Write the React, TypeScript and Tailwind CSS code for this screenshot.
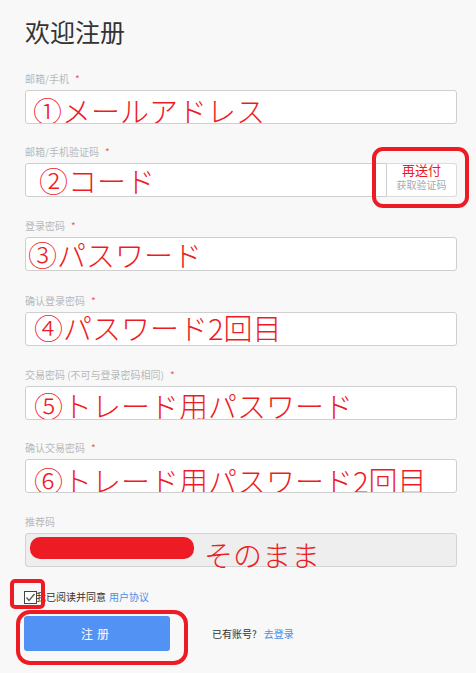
import React from "react"

const cjk = { fontFamily: '"Noto Sans CJK SC", "Noto Sans", sans-serif' }
const jp = { fontFamily: '"Noto Sans CJK JP", "Noto Sans", sans-serif' }

interface FieldProps {
  label: string
  required?: boolean
  className: string
  children: React.ReactNode
}

function Field({ label, required, className, children }: FieldProps) {
  return (
    <div className={className}>
      <div className="mb-[4px] text-[10px] leading-[14px] text-[#b8b8b8]">
        {label}
        {required && <span className="ml-[6px] text-[#f25a5a]">*</span>}
      </div>
      {children}
    </div>
  )
}

function Note({ text, className }: { text: string; className: string }) {
  return (
    <div
      className={`h-[34px] overflow-hidden rounded-[3px] border border-[#cfcfcf] bg-white ${className}`}
    >
      <span style={jp} className="block whitespace-nowrap text-[29px] font-light leading-[29px] text-[#ed1c24]">
        {text}
      </span>
    </div>
  )
}

export default function App() {
  return (
    <div style={cjk} className="relative min-h-[673px] w-[476px] bg-[#f8f8f8] pl-[25px] pr-[19px] pt-[15px]">
      <h1 className="text-[25px] leading-[32px] text-[#333]">欢迎注册</h1>

      <Field label="邮箱/手机" required className="mt-[25px]">
        <Note text="①メールアドレス" className="pl-[7px] pt-[5px]" />
      </Field>

      <Field label="邮箱/手机验证码" required className="mt-[21px]">
        <div className="flex h-[34px]">
          <div className="flex-1 overflow-hidden rounded-l-[3px] border border-[#cfcfcf] bg-white pl-[13px] pt-[2px]">
            <span style={jp} className="block whitespace-nowrap text-[29px] font-light leading-[29px] text-[#ed1c24]">
              ②コード
            </span>
          </div>
          <div className="flex w-[70px] flex-col items-center rounded-r-[3px] border border-l-0 border-[#dcdcdc] bg-white">
            <span style={jp} className="-mt-[2px] text-[13px] leading-[16px] text-[#ed1c24]">再送付</span>
            <span className="text-[10px] leading-[14px] text-[#aaa]">获取验证码</span>
          </div>
        </div>
      </Field>

      <Field label="登录密码" required className="mt-[22px]">
        <Note text="③パスワード" className="pl-[2px] pt-[2px]" />
      </Field>

      <Field label="确认登录密码" required className="mt-[23px]">
        <Note text="④パスワード2回目" className="pl-[8px] pt-0" />
      </Field>

      <Field label="交易密码 (不可与登录密码相同)" required className="mt-[22px]">
        <Note text="⑤トレード用パスワード" className="pl-[8px] pt-[4px]" />
      </Field>

      <Field label="确认交易密码" required className="mt-[21px]">
        <Note text="⑥トレード用パスワード2回目" className="pl-[8px] pt-[6px]" />
      </Field>

      <Field label="推荐码" className="mt-[22px]">
        <div className="flex h-[34px] items-start rounded-[3px] border border-[#d3d3d3] bg-[#eeeeee] pl-[4px] pt-[3px]">
          <div className="h-[22px] w-[164px] rounded-[10px] bg-[#ed1c24]" />
          <span style={jp} className="ml-[10px] mt-[3px] whitespace-nowrap text-[29px] font-light leading-[29px] text-[#ed1c24]">
            そのまま
          </span>
        </div>
      </Field>

      <div className="-ml-[1px] mt-[23px] flex items-center text-[10px] leading-[14px]">
        <svg width="13" height="13" viewBox="0 0 13 13" className="shrink-0">
          <rect x="0.5" y="0.5" width="12" height="12" fill="white" stroke="#444" />
          <polyline points="2.5,6.5 5,9.5 10.5,3" fill="none" stroke="#555" strokeWidth="1.3" />
        </svg>
        <span className="-ml-[1px] text-[#333]">我已阅读并同意</span>
        <span className="ml-[3px] text-[#4a8fe8]">用户协议</span>
      </div>

      <div className="mt-[12px] flex items-center">
        <button className="-ml-[1px] h-[35px] w-[146px] rounded-[3px] bg-[#5292f4] text-[12px] tracking-[4px] text-white">
          注册
        </button>
        <span className="ml-[42px] text-[10px] text-[#333]">已有账号?</span>
        <span className="ml-[7px] text-[10px] text-[#4a8fe8]">去登录</span>
      </div>

      {/* red annotation frames */}
      <div className="absolute left-[372px] top-[147px] h-[61px] w-[97px] rounded-[11px] border-[4px] border-[#ed1c24]" />
      <div className="absolute left-[10px] top-[579px] h-[30px] w-[35px] rounded-[5px] border-[4px] border-[#ed1c24]" />
      <div className="absolute left-[16px] top-[610px] h-[55px] w-[172px] rounded-[14px] border-[4px] border-[#ed1c24]" />
    </div>
  )
}
